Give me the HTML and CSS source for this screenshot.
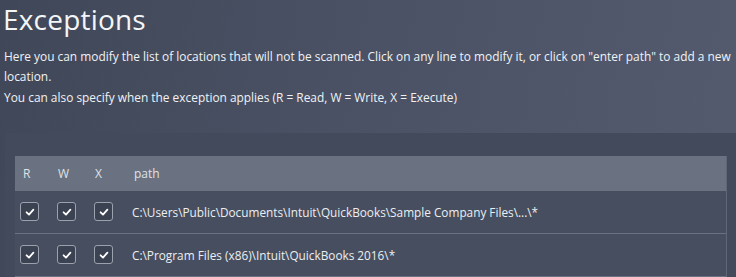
FILE: index.html
```html
<!DOCTYPE html>
<html>
<head>
<meta charset="utf-8">
<link rel="stylesheet" href="styles.css">
</head>
<body>
<div class="page">
  <h1 class="title">Exceptions</h1>
  <p class="desc first">Here you can modify the list of locations that will not be scanned. Click on any line to modify it, or click on "enter path" to add a new location.</p>
  <p class="desc second">You can also specify when the exception applies (R = Read, W = Write, X = Execute)</p>
  <div class="panel">
    <div class="table">
      <div class="row head">
        <div class="cell c-r">R</div>
        <div class="cell c-w">W</div>
        <div class="cell c-x">X</div>
        <div class="cell c-path">path</div>
      </div>
      <div class="row item">
        <div class="cell c-r"><span class="cb"><svg viewBox="0 0 12 12"><path d="M2.6 6.3 L5 8.6 L9.4 3.6"/></svg></span></div>
        <div class="cell c-w"><span class="cb"><svg viewBox="0 0 12 12"><path d="M2.6 6.3 L5 8.6 L9.4 3.6"/></svg></span></div>
        <div class="cell c-x"><span class="cb"><svg viewBox="0 0 12 12"><path d="M2.6 6.3 L5 8.6 L9.4 3.6"/></svg></span></div>
        <div class="cell c-path">C:\Users\Public\Documents\Intuit\QuickBooks\Sample Company Files\...\*</div>
      </div>
      <div class="row item">
        <div class="cell c-r"><span class="cb"><svg viewBox="0 0 12 12"><path d="M2.6 6.3 L5 8.6 L9.4 3.6"/></svg></span></div>
        <div class="cell c-w"><span class="cb"><svg viewBox="0 0 12 12"><path d="M2.6 6.3 L5 8.6 L9.4 3.6"/></svg></span></div>
        <div class="cell c-x"><span class="cb"><svg viewBox="0 0 12 12"><path d="M2.6 6.3 L5 8.6 L9.4 3.6"/></svg></span></div>
        <div class="cell c-path">C:\Program Files (x86)\Intuit\QuickBooks 2016\*</div>
      </div>
    </div>
  </div>
</div>
</body>
</html>
```
FILE: styles.css
```css
html, body {
  margin: 0;
  padding: 0;
}
body {
  width: 736px;
  height: 277px;
  overflow: hidden;
  background: linear-gradient(100deg, #404758 0%, #4a5164 45%, #545b6e 100%);
  font-family: "Open Sans", "DejaVu Sans", sans-serif;
  color: #eef0f3;
}
.page {
  display: flex;
  flex-direction: column;
  height: 277px;
}
.title {
  margin: 0;
  padding: 2px 0 0 3px;
  font-family: "Open Sans", sans-serif;
  font-weight: 400;
  font-size: 28px;
  line-height: 34px;
  color: #f4f5f7;
  letter-spacing: 0.2px;
}
.desc {
  margin: 0;
  padding-left: 4px;
  font-size: 11.9px;
  line-height: 19.5px;
  color: #f0f2f5;
  width: 732px;
}
.first {
  margin-top: 11px;
}
.second {
  margin-top: 2px;
}
.panel {
  margin-top: 25px;
  margin-left: 5px;
  flex: 1;
  background: #434a5b;
  padding: 23px 0 0 10px;
}
.table {
  width: 711px;
  border-right: 1px solid #5f6676;
  height: 100%;
}
.row {
  display: flex;
  align-items: center;
}
.head {
  height: 35px;
  background: #6a7180;
  color: #dfe2e7;
  font-size: 12px;
}
.item {
  height: 42px;
  background: #474e5f;
  border-bottom: 1px solid #6b7181;
  font-size: 11.8px;
  color: #eceef2;
}
.cell {
  flex: none;
}
.c-r {
  width: 37px;
  padding-left: 5px;
}
.head .c-r { padding-left: 8px; width: 34px; }
.c-w { width: 37px; }
.head .c-w { padding-left: 1px; width: 36px; }
.c-x { width: 38px; }
.head .c-x { padding-left: 1px; width: 37px; }
.c-path {
  flex: 1;
  padding-left: 0;
}
.head .c-path { padding-left: 2px; }
.cb {
  display: flex;
  width: 17px;
  height: 17px;
  border: 1px solid #9ba1ad;
  border-radius: 3px;
  background: #3b4252;
  align-items: center;
  justify-content: center;
}
.cb svg {
  width: 12px;
  height: 12px;
}
.cb path {
  fill: none;
  stroke: #ffffff;
  stroke-width: 1.8;
  stroke-linecap: round;
  stroke-linejoin: round;
}
```
